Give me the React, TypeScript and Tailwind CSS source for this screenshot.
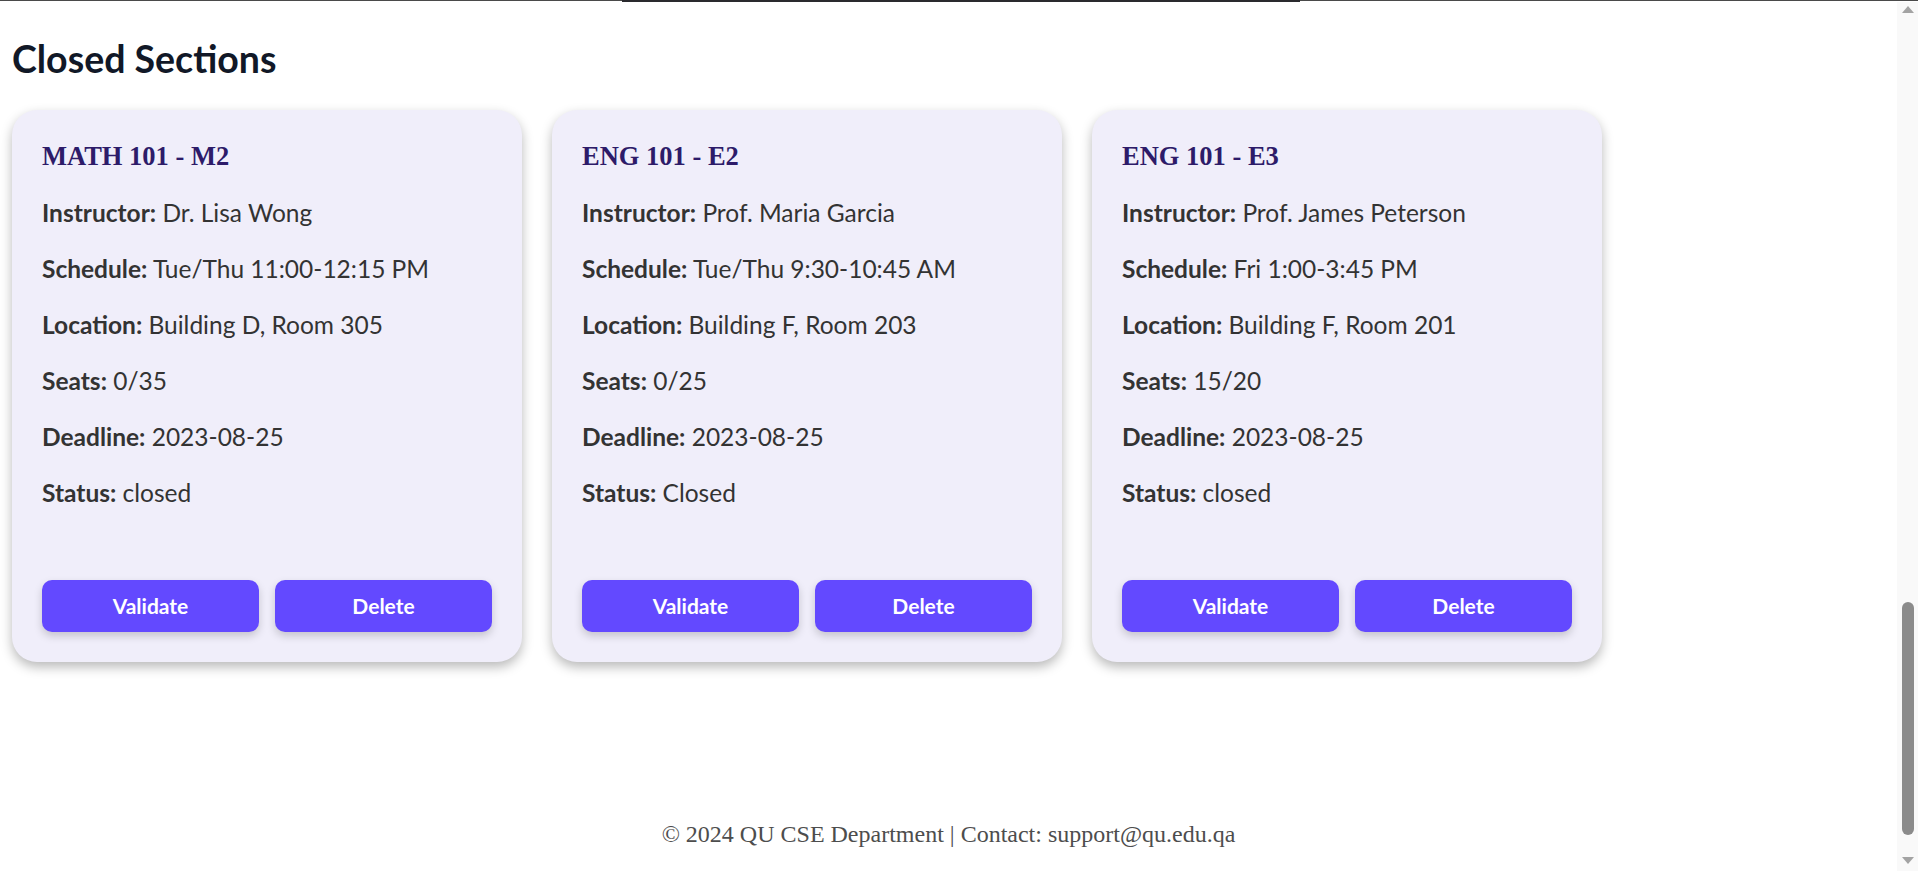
import React from "react";

type Section = {
  title: string;
  instructor: string;
  schedule: string;
  location: string;
  seats: string;
  deadline: string;
  status: string;
};

const sections: Section[] = [
  {
    title: "MATH 101 - M2",
    instructor: "Dr. Lisa Wong",
    schedule: "Tue/Thu 11:00-12:15 PM",
    location: "Building D, Room 305",
    seats: "0/35",
    deadline: "2023-08-25",
    status: "closed",
  },
  {
    title: "ENG 101 - E2",
    instructor: "Prof. Maria Garcia",
    schedule: "Tue/Thu 9:30-10:45 AM",
    location: "Building F, Room 203",
    seats: "0/25",
    deadline: "2023-08-25",
    status: "Closed",
  },
  {
    title: "ENG 101 - E3",
    instructor: "Prof. James Peterson",
    schedule: "Fri 1:00-3:45 PM",
    location: "Building F, Room 201",
    seats: "15/20",
    deadline: "2023-08-25",
    status: "closed",
  },
];

const sans = "font-['Lato','Open_Sans',sans-serif]";
const serif = "font-['Liberation_Serif','Times_New_Roman',serif]";

function Row({ label, value }: { label: string; value: string }) {
  return (
    <p className="h-[30px] leading-[30px] text-[24.5px] text-[#333333] whitespace-nowrap">
      <strong className="font-bold">{label}:</strong> {value}
    </p>
  );
}

function Card({ s }: { s: Section }) {
  return (
    <div className="w-[510px] h-[552px] rounded-[25px] bg-[#f0eefa] p-[30px] flex flex-col shadow-[0_5px_12px_rgba(0,0,0,0.28)]">
      <h3 className={`${serif} text-[26.5px] font-bold leading-[33px] text-[#2d1b69]`}>{s.title}</h3>
      <div className="mt-[25px] flex flex-col gap-[26px]">
        <Row label="Instructor" value={s.instructor} />
        <Row label="Schedule" value={s.schedule} />
        <Row label="Location" value={s.location} />
        <Row label="Seats" value={s.seats} />
        <Row label="Deadline" value={s.deadline} />
        <Row label="Status" value={s.status} />
      </div>
      <div className="mt-auto grid grid-cols-2 gap-4">
        <button className="h-[52px] rounded-[10px] bg-[#6349ff] text-white text-[21px] font-bold shadow-[0_4px_8px_rgba(0,0,0,0.18)]">
          Validate
        </button>
        <button className="h-[52px] rounded-[10px] bg-[#6349ff] text-white text-[21px] font-bold shadow-[0_4px_8px_rgba(0,0,0,0.18)]">
          Delete
        </button>
      </div>
    </div>
  );
}

function Scrollbar() {
  return (
    <div className="w-[21px] bg-[#f9f9f9] flex flex-col items-center">
      <div className="h-[14px] flex items-center justify-center">
        <svg width="12" height="7" viewBox="0 0 12 7">
          <polygon points="6,0 12,7 0,7" fill="#a3a3a3" />
        </svg>
      </div>
      <div className="flex-1" />
      <div className="w-[12px] h-[233px] rounded-full bg-[#8b8b8b]" />
      <div className="h-[15px]" />
      <div className="h-[21px] flex items-center justify-center">
        <svg width="12" height="7" viewBox="0 0 12 7">
          <polygon points="0,0 12,0 6,7" fill="#a3a3a3" />
        </svg>
      </div>
    </div>
  );
}

export default function App() {
  return (
    <div className={`${sans} h-[871px] w-full overflow-hidden bg-white flex flex-col`}>
      <div className="h-[2px] flex">
        <div className="w-[622px] h-px bg-[#4a4a4a]" />
        <div className="w-[678px] h-[2px] bg-[#2a2a2e]" />
        <div className="flex-1 h-px bg-[#4a4a4a]" />
      </div>
      <div className="flex-1 flex min-h-0">
        <main className="flex-1 flex flex-col">
          <div className="px-3">
            <h2 className="mt-[35px] text-[37.5px] leading-[44px] font-bold text-[#111827]">Closed Sections</h2>
            <div className="mt-[29px] flex gap-[30px]">
              {sections.map((s) => (
                <Card key={s.title} s={s} />
              ))}
            </div>
          </div>
          <footer className={`${serif} mt-[158px] text-center text-[24px] leading-[28px] text-[#4d4d4d]`}>
            © 2024 QU CSE Department | Contact: support@qu.edu.qa
          </footer>
        </main>
        <Scrollbar />
      </div>
    </div>
  );
}
